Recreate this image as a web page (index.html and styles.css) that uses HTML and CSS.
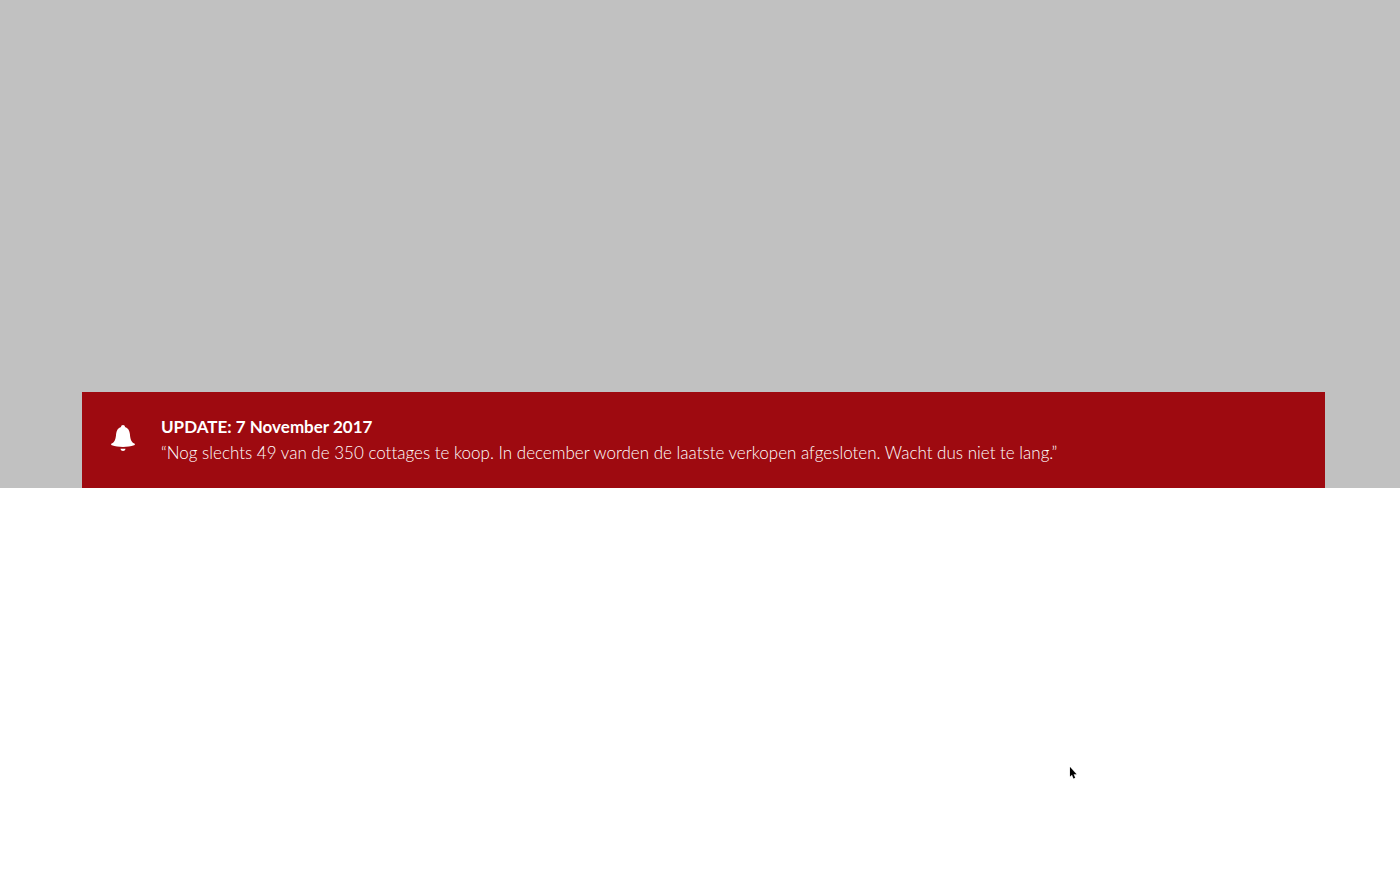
FILE: index.html
```html
<!DOCTYPE html>
<html lang="nl">
<head>
    <meta charset="UTF-8">
    <meta name="viewport" content="width=device-width, initial-scale=1.0">
    <title>Update</title>
    <link rel="stylesheet" href="styles.css">
</head>
<body>
    <section class="hero">
        <div class="notice">
            <svg class="notice-icon" viewBox="0 0 24 32" aria-hidden="true">
                <path d="M12 1c-1.200 0-2 .8-2 1.900C7 3.900 5.400 6.500 5.100 10 4.700 15.500 3.700 18 .7 19.600c-.9.500-.7 1.300.2 1.700C4 22.600 8 23 12 23s8-.4 11.100-1.700c.9-.4 1.100-1.200.2-1.700-3-1.600-4-4.100-4.400-9.600C18.600 6.500 17 3.900 14 2.900 14 1.800 13.200 1 12 1z"/>
                <path d="M9.500 24.800h5c-.3 1.400-1.200 2.200-2.500 2.200s-2.200-.8-2.500-2.200z"/>
            </svg>
            <div class="notice-text">
                <strong>UPDATE: 7 November 2017</strong>
                <p>“Nog slechts 49 van de 350 cottages te koop. In december worden de laatste verkopen afgesloten. Wacht dus niet te lang.”</p>
            </div>
        </div>
    </section>

    <svg class="cursor" viewBox="0 0 8 14" aria-hidden="true">
        <path d="M1 1v9.500l2-1.800 1.500 3.800 1.600-.7-1.500-3.600h2.900z"/>
    </svg>
</body>
</html>
```

FILE: styles.css
```css
body {
    margin: 0;
    background-color: #fff;
    font-family: Lato, sans-serif;
    font-size: 17px;
    line-height: 26px;
    font-variant-ligatures: none;
}
.hero {
    display: flex;
    flex-direction: column;
    justify-content: flex-end;
    min-height: 488px;
    padding: 0 75px 0 82px;
    box-sizing: border-box;
    background-color: #c1c1c1;
}
.notice {
    display: flex;
    align-items: center;
    gap: 26px;
    padding: 22px 29px;
    background-color: #9e0a10;
    color: #fff;
}
.notice-icon {
    flex: none;
    width: 24px;
    height: 32px;
    fill: #fff;
}
.notice-text strong {
    display: block;
    font-weight: 700;
}
.notice-text p {
    margin: 0;
    font-weight: 300;
}
/* mouse pointer */
.cursor {
    position: absolute;
    left: 1069px;
    top: 766px;
    width: 8px;
    height: 14px;
    fill: #000;
    stroke: #ddd;
    stroke-width: 1;
    paint-order: stroke;
}
```
